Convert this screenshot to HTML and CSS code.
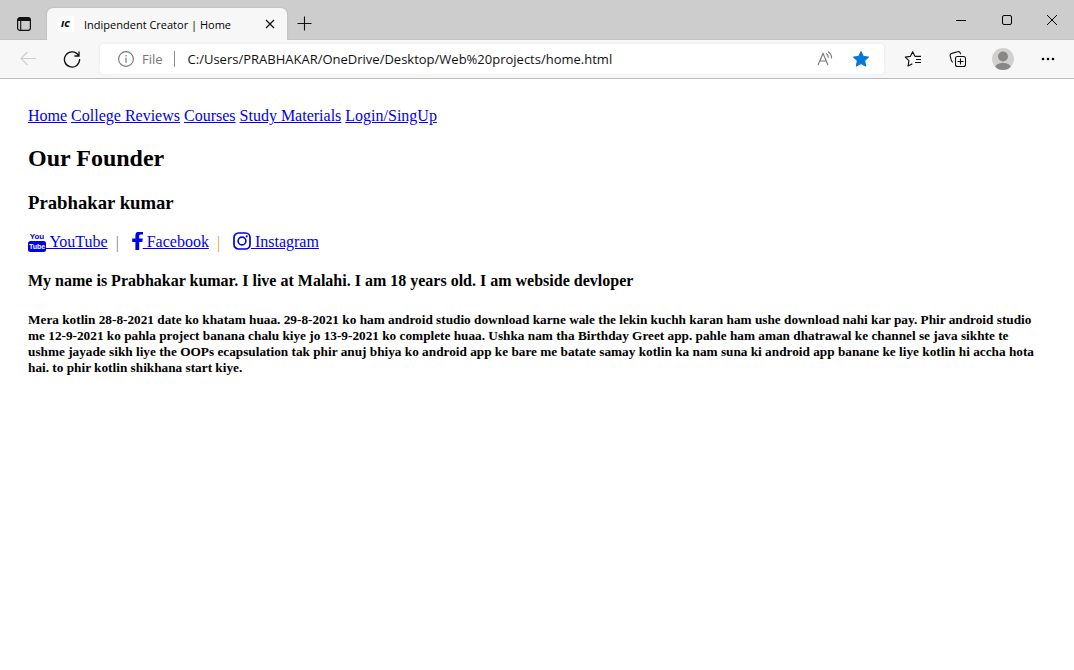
FILE: index.html
```html
<!DOCTYPE html>
<html lang="en">
<head>
<meta charset="utf-8">
<title>Indipendent Creator | Home</title>
<link rel="stylesheet" href="styles.css">
</head>
<body>
<header class="browser">
  <div class="tabstrip">
    <button class="tab-actions" aria-label="Tab actions"><svg width="16" height="16" viewBox="0 0 16 16"><rect x="1.6" y="1.6" width="12.8" height="12.8" rx="2.4" fill="none" stroke="#111" stroke-width="1.2"/><path d="M1.5 5V4a2.5 2.5 0 0 1 2.500-2.500h8A2.500 2.500 0 0 1 14.500 4v1z" fill="#111"/><path d="M4.700 5v9.500" stroke="#111" stroke-width="1.100"/></svg></button>
    <div class="tab">
      <svg class="favicon" width="16" height="16" viewBox="0 0 16 16"><rect width="16" height="16" fill="#fff"/><text class="favicon-text" x="3" y="11">IC</text></svg>
      <span class="tab-title">Indipendent Creator | Home</span>
      <button class="tab-close" aria-label="Close tab"><svg width="10" height="10" viewBox="0 0 10 10"><path d="M1 1l8 8M9 1L1 9" stroke="#111" stroke-width="1.300"/></svg></button>
    </div>
    <button class="new-tab" aria-label="New tab"><svg width="16" height="16" viewBox="0 0 16 16"><path d="M8.500 .5v14M1.500 7.500h14" stroke="#111" stroke-width="1.100"/></svg></button>
    <div class="window-controls">
      <button aria-label="Minimize"><svg width="12" height="12" viewBox="0 0 12 12"><path d="M1 6.500h10" stroke="#000"/></svg></button>
      <button aria-label="Maximize"><svg width="12" height="12" viewBox="0 0 12 12"><rect x="1.500" y="1.500" width="9" height="9" rx="1.500" fill="none" stroke="#000"/></svg></button>
      <button aria-label="Close"><svg width="12" height="12" viewBox="0 0 12 12"><path d="M1 1l10 10M11 1L1 11" stroke="#000"/></svg></button>
    </div>
  </div>
  <div class="toolbar">
    <button class="nav-button" aria-label="Back"><svg width="18" height="18" viewBox="0 0 18 18"><path d="M17 8.500H2M8.500 2L2 8.500 8.500 15" fill="none" stroke="#cfcfcf" stroke-width="1.100"/></svg></button>
    <button class="nav-button" aria-label="Refresh"><svg width="18" height="18" viewBox="0 0 18 18"><path d="M15.500 5.500A7.600 7.600 0 1 0 16.600 9M16 1.500v4.500h-4.600" fill="none" stroke="#111" stroke-width="1.300"/></svg></button>
    <div class="address">
      <svg width="16" height="16" viewBox="0 0 16 16"><circle cx="8" cy="8" r="7.400" fill="none" stroke="#757575" stroke-width="1.100"/><path d="M8 6.800v5M8 4v1.400" stroke="#757575" stroke-width="1.200"/></svg>
      <label class="scheme" for="url">File</label>
      <input class="url" id="url" type="text" value="C:/Users/PRABHAKAR/OneDrive/Desktop/Web%20projects/home.html">
      <button class="address-button" aria-label="Read aloud"><svg width="16" height="16" viewBox="0 0 16 16"><path d="M1 14L6 2.500 11 14M2.600 10h6.800M9 2.300a5 5 0 0 1 2.300 4.500M11 .8a7.500 7.500 0 0 1 3.600 6.700" fill="none" stroke="#777" stroke-width="1.100"/></svg></button>
      <button class="address-button" aria-label="Favorite"><svg width="18" height="18" viewBox="0 0 18 18"><path d="M9 1.500l2.300 4.900 5.300.7-3.900 3.700 1 5.400L9 13.600l-4.700 2.600 1-5.400L1.400 7.100l5.300-.7z" fill="#0078d7" stroke="#0078d7" stroke-linejoin="round"/></svg></button>
    </div>
    <div class="actions">
      <button aria-label="Favorites"><svg width="18" height="18" viewBox="0 0 18 18"><path d="M11 6.400L8.700 1.700 6.300 6.400 1.300 7.100l3.600 3.500-.8 5.400 4.200-2.200M11 6.400h6M12 9.500h5M11 12.500h6" fill="none" stroke="#111" stroke-width="1.150" stroke-linejoin="round"/></svg></button>
      <button aria-label="Collections"><svg width="18" height="18" viewBox="0 0 18 18"><path d="M4 12.200a2.400 2.400 0 0 1-1.600-1.600L1.200 6.200A2.300 2.300 0 0 1 2.800 3.400L8.600 1.800a2.300 2.300 0 0 1 2.800 1.600l.3.800" fill="none" stroke="#111" stroke-width="1.100"/><rect x="6.500" y="6.500" width="10" height="10" rx="2" fill="none" stroke="#111" stroke-width="1.100"/><path d="M11.500 8.500v6M8.500 11.500h6" stroke="#111" stroke-width="1.100"/></svg></button>
      <button aria-label="Profile"><svg width="22" height="22" viewBox="0 0 22 22"><defs><clipPath id="disc"><circle cx="11" cy="11" r="11"/></clipPath></defs><g clip-path="url(#disc)"><rect width="22" height="22" fill="#d2d0ce"/><circle cx="11" cy="8.500" r="5" fill="#898785"/><ellipse cx="11" cy="20" rx="8" ry="5.200" fill="#898785"/></g></svg></button>
      <button aria-label="Settings and more"><svg width="14" height="4" viewBox="0 0 14 4"><circle cx="2" cy="2" r="1.300"/><circle cx="7" cy="2" r="1.300"/><circle cx="12" cy="2" r="1.300"/></svg></button>
    </div>
  </div>
</header>
<main class="page">
  <nav><a href="#">Home</a> <a href="#">College Reviews</a> <a href="#">Courses</a> <a href="#">Study Materials</a> <a href="#">Login/SingUp</a></nav>
  <h2>Our Founder</h2>
  <h3>Prabhakar kumar</h3>
  <div class="social">
    <a href="#"><svg width="18" height="22" viewBox="0 0 18 22"><text class="you" x="9" y="7" text-anchor="middle">You</text><rect x="0" y="9" width="18" height="11" rx="2.500" fill="#00e"/><text class="tube" x="9" y="17" text-anchor="middle">Tube</text></svg> YouTube</a>
    <span class="bar bar-gray">|</span>
    <a href="#"><svg width="11" height="22" viewBox="0 2 11 22"><path d="M11 1.200v3.200H9C7.500 4.400 7.200 5.100 7.200 6.200v2.300h3.600l-.5 3.600H7.200V20H3.400v-7.900H.2V8.500h3.200V5.700C3.400 2.700 5.300 1 8.200 1z" fill="#00e"/></svg> Facebook</a>
    <span class="bar bar-orange">|</span>
    <a href="#"><svg width="18" height="22" viewBox="0 1 18 22"><rect x="1" y="2" width="16" height="16" rx="4.500" fill="none" stroke="#00e" stroke-width="1.700"/><circle cx="9" cy="10" r="3.900" fill="none" stroke="#00e" stroke-width="1.600"/><circle cx="13.700" cy="5.300" r="1.100" fill="#00e"/></svg> Instagram</a>
  </div>
  <h4>My name is Prabhakar kumar. I live at Malahi. I am 18 years old. I am webside devloper</h4>
  <h5>Mera kotlin 28-8-2021 date ko khatam huaa. 29-8-2021 ko ham android studio download karne wale the lekin kuchh karan ham ushe download nahi kar pay. Phir android studio me 12-9-2021 ko pahla project banana chalu kiye jo 13-9-2021 ko complete huaa. Ushka nam tha Birthday Greet app. pahle ham aman dhatrawal ke channel se java sikhte te ushme jayade sikh liye the OOPs ecapsulation tak phir anuj bhiya ko android app ke bare me batate samay kotlin ka nam suna ki android app banane ke liye kotlin hi accha hota hai. to phir kotlin shikhana start kiye.</h5>
</main>
</body>
</html>
```
FILE: styles.css
```css
* { box-sizing: border-box; }
body { margin: 0; background: #fff; color: #000; font-family: "Liberation Serif", "Times New Roman", serif; font-size: 16px; }
button { display: flex; align-items: center; justify-content: center; padding: 0; border: 0; background: none; }
svg { display: block; flex: none; }

.browser { font-family: "Open Sans", "Noto Sans", sans-serif; }
.tabstrip { display: flex; height: 40px; background: #cdcdcd; border-bottom: 1px solid #c4c4c4; }
.tab-actions { width: 47px; padding-top: 8px; }
.tab { display: flex; align-items: center; width: 240px; height: 32px; margin-top: 8px; padding: 0 12px 0 11px; border-radius: 6px 6px 0 0; background: #f7f7f7; box-shadow: 0 0 2px #aaa; clip-path: inset(-3px -3px 0 -3px); }
.favicon-text { font: italic 800 9px "Open Sans", sans-serif; fill: #111; }
.tab-title { flex: 1; margin-left: 10px; font-size: 11px; white-space: nowrap; }
.new-tab { width: 34px; padding-top: 8px; }
.window-controls { display: flex; margin-left: auto; }
.window-controls button { width: 46px; }
.window-controls button:last-child { width: 44px; }

.toolbar { display: flex; align-items: center; height: 39px; padding-left: 6px; background: #f7f7f7; border-bottom: 1px solid #bdbdbd; }
.nav-button { width: 44px; height: 32px; }
.address { display: flex; flex: 1; align-items: center; height: 30px; margin-left: 6px; padding: 0 14px 0 18px; border-radius: 4px; background: #fff; box-shadow: 0 0 3px #e4e4e4; }
.scheme { margin-left: 8px; padding-right: 11px; border-right: 1px solid #8a8a8a; color: #757575; font-size: 13px; line-height: 16px; }
.url { flex: 1; min-width: 0; margin: 0; padding: 0 0 0 13px; border: 0; outline: 0; background: none; color: #111; font-family: inherit; font-size: 13px; }
.address-button { width: 18px; margin-left: 18px; }
.actions { display: flex; align-items: center; padding: 0 4px 0 6px; }
.actions button { width: 45px; height: 32px; }

.page { padding: 27px 28px; }
nav { line-height: 20px; }
a { color: #00e; text-decoration: underline; }
h2 { margin: 18px 0 20px; font-size: 24px; line-height: 28px; }
h3 { margin: 0 0 17px; line-height: 22px; }
.social { display: flex; align-items: center; line-height: 22px; }
.social svg { display: inline-block; vertical-align: middle; }
.bar { width: 3px; margin: 0 13px 0 8px; }
.bar-gray { color: #808070; }
.bar-orange { color: #e8953c; }
.you { font: bold 8px "Liberation Sans Narrow", "Liberation Sans", sans-serif; fill: #00e; }
.tube { font: bold 7px "Liberation Sans Narrow", "Liberation Sans", sans-serif; fill: #fff; }
h4 { margin: 17px 0 21px; font-size: 16px; line-height: 20px; }
h5 { margin: 0; line-height: 16px; }
```
